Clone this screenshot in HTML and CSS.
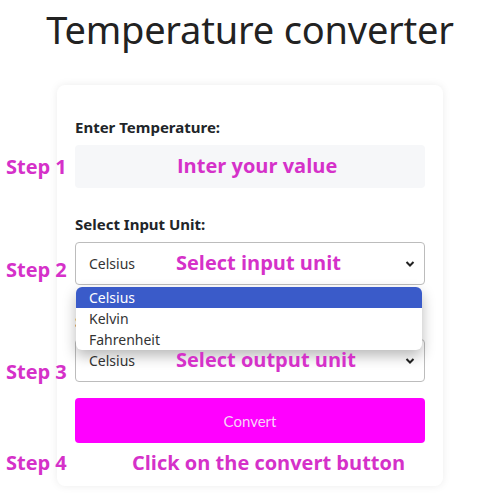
FILE: index.html
```html
<!DOCTYPE html>
<html lang="en">
<head>
<meta charset="UTF-8">
<meta name="viewport" content="width=device-width, initial-scale=1.0">
<title>Temperature converter</title>
<link rel="stylesheet" href="styles.css">
</head>
<body>
<div class="stage">
    <h1>Temperature converter</h1>
    <div class="card">
        <label class="field-label">Enter Temperature:</label>
        <div class="text-input"></div>

        <label class="field-label">Select Input Unit:</label>
        <div class="select">
            <span>Celsius</span>
            <svg class="chevron" width="10" height="8" viewBox="0 0 10 8"><path d="M1.5 2 L5 5.5 L8.5 2" fill="none" stroke="#222" stroke-width="2"/></svg>
        </div>

        <label class="field-label">Select Output Unit:</label>
        <div class="select">
            <span>Celsius</span>
            <svg class="chevron" width="10" height="8" viewBox="0 0 10 8"><path d="M1.5 2 L5 5.5 L8.5 2" fill="none" stroke="#222" stroke-width="2"/></svg>
        </div>

        <button class="convert">Convert</button>

        <!-- open list of the input unit select -->
        <ul class="options">
            <li class="active">Celsius</li>
            <li>Kelvin</li>
            <li>Fahrenheit</li>
        </ul>
    </div>

    <!-- annotations -->
    <div class="note step s1">Step 1</div>
    <div class="note hint h1n">Inter your value</div>
    <div class="note step s2">Step 2</div>
    <div class="note hint h2n">Select input unit</div>
    <div class="note step s3">Step 3</div>
    <div class="note hint h3n">Select output unit</div>
    <div class="note step s4">Step 4</div>
    <div class="note hint h4n">Click on the convert button</div>
</div>
</body>
</html>
```

FILE: styles.css
```css
body {
    margin: 0;
    background-color: #fff;
    font-family: "Noto Sans", "Open Sans", sans-serif;
    color: #212529;
}
.stage {
    position: relative;
    width: 500px;
    height: 500px;
}
h1 {
    margin: 0;
    padding-top: 4px;
    font-size: 38px;
    font-weight: 400;
    line-height: 50px;
    text-align: center;
    color: #222;
    letter-spacing: -0.2px;
}
.card {
    position: relative;
    width: 350px;
    margin: 31px auto 0;
    padding: 32px 18px 43px;
    background-color: #fff;
    border-radius: 8px;
    box-shadow: 0 0 8px rgba(0, 0, 0, 0.08);
    display: flex;
    flex-direction: column;
}
.field-label {
    font-size: 15px;
    font-weight: 700;
    line-height: 20px;
    margin-bottom: 8px;
}
.text-input {
    height: 43px;
    background-color: #f6f7f9;
    border-radius: 4px;
    margin-bottom: 26px;
}
.select {
    height: 41px;
    border: 1px solid #bcbcbc;
    border-radius: 4px;
    background-color: #fff;
    display: flex;
    align-items: center;
    justify-content: space-between;
    padding: 0 9px 0 13px;
    font-size: 14px;
    color: #333;
    margin-bottom: 26px;
}
.convert {
    height: 45px;
    margin-top: -10px;
    border: none;
    border-radius: 4px;
    background-color: #ff00ff;
    color: #f8d4f8;
    font-family: Lato, sans-serif;
    font-size: 15px;
}
.options {
    position: absolute;
    top: 202px;
    left: 19px;
    width: 346px;
    margin: 0;
    padding: 0;
    list-style: none;
    background-color: #fff;
    border-radius: 6px;
    overflow: hidden;
    box-shadow: 0 6px 14px rgba(0, 0, 0, 0.28);
    font-size: 14px;
    color: #333;
}
.options li {
    height: 21px;
    line-height: 21px;
    padding-left: 13px;
}
.options li.active {
    background-color: #3a5bc9;
    color: #fff;
}
.note {
    position: absolute;
    font-family: "Open Sans", sans-serif;
    font-weight: 700;
    font-size: 20px;
    line-height: 24px;
    color: #d531c9;
    white-space: nowrap;
}
.step {
    left: 6px;
}
.s1 { top: 155px; }
.s2 { top: 258px; }
.s3 { top: 360px; }
.s4 { top: 451px; }
.h1n { top: 154px; left: 177px; }
.h2n { top: 251px; left: 176px; }
.h3n { top: 348px; left: 176px; }
.h4n { top: 451px; left: 132px; }
```
